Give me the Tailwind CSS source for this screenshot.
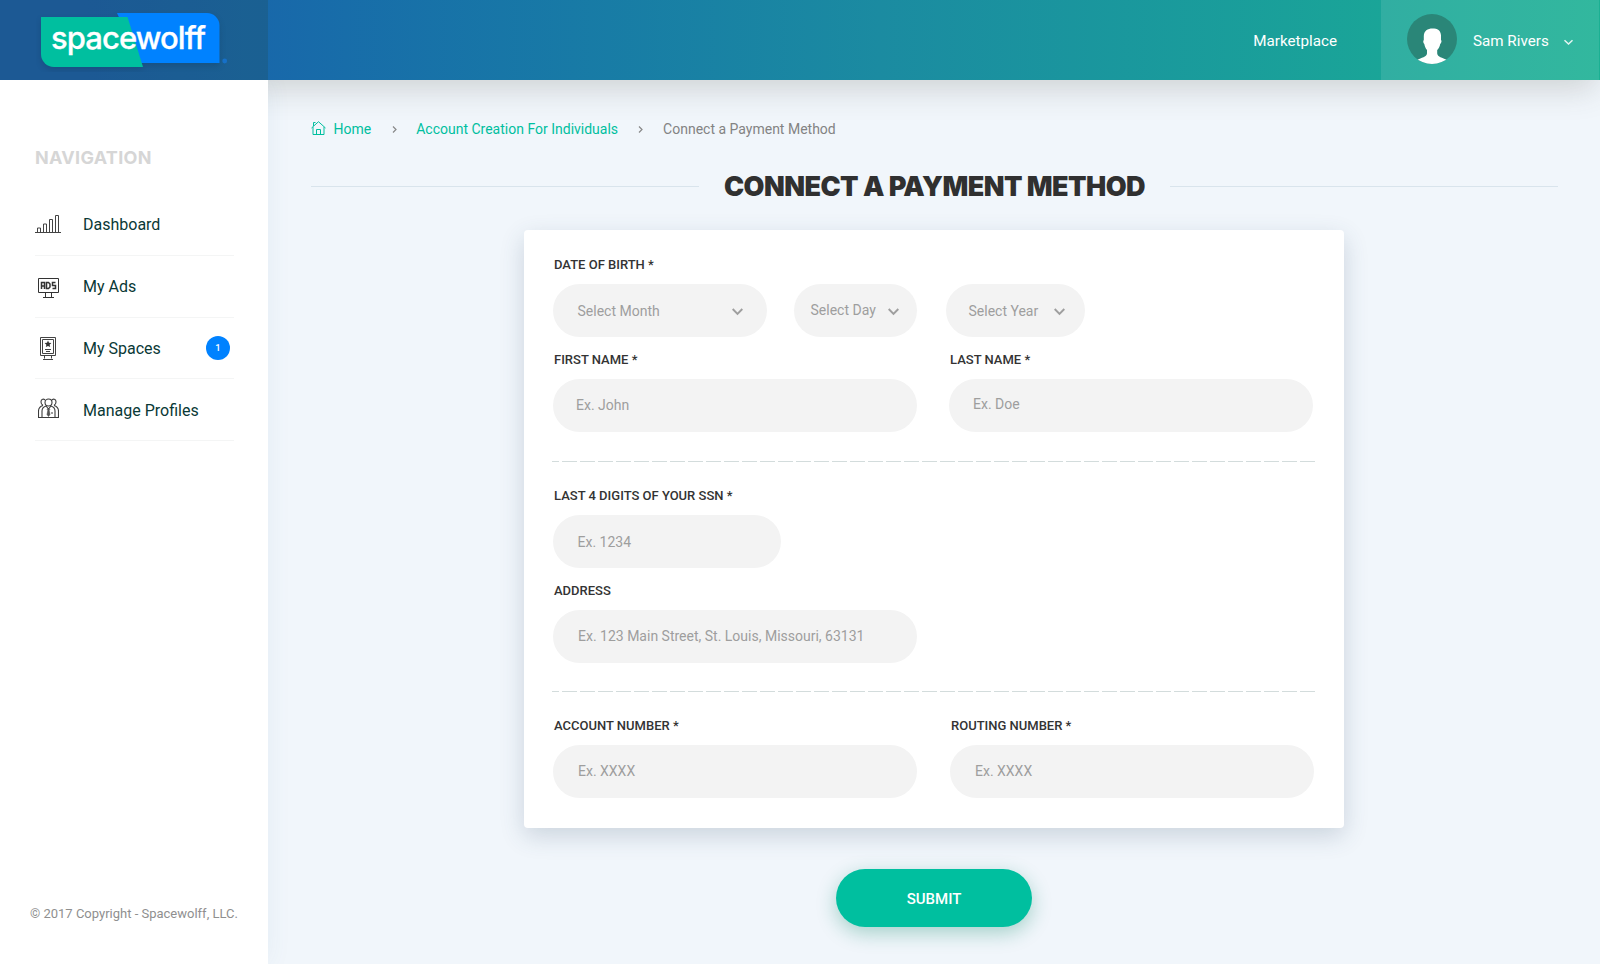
<!DOCTYPE html>
<html lang="en">
<head>
<meta charset="utf-8">
<title>Spacewolff - Connect a Payment Method</title>
<script src="https://cdn.jsdelivr.net/npm/@tailwindcss/browser@4"></script>
</head>
<body class="flex h-[964px] w-[1600px] flex-col overflow-hidden bg-[#f1f6fb] font-['Roboto',sans-serif]">

<header class="relative z-20 flex h-20 shrink-0 bg-linear-to-r from-[#1a5dac] from-5% via-[#1b8ba1] via-55% to-[#1bb093] to-100%">
  <div class="flex w-[268px] items-start bg-[#22505c]/30">
    <svg class="ml-9 mt-2" width="200" height="64" viewBox="36 8 200 64">
      <g class="drop-shadow-md">
        <path d="M117 13H207a12.500 12.500 0 0 1 12.500 12.500V63H140Z" fill="#0082ff"/>
        <path d="M41 17H127.500L143 67H54a13 13 0 0 1-13-13Z" fill="#00bf9f"/>
      </g>
      <circle cx="224.700" cy="61" r="2.400" fill="#1670c8"/>
      <text x="51" y="48.500" font-family="Inter, sans-serif" font-size="31" font-weight="500" fill="#fff" stroke="#fff" stroke-width=".3" textLength="155" lengthAdjust="spacing">spacewolff</text>
    </svg>
  </div>
  <div class="flex flex-1 items-center justify-end text-[15px] text-white">
    <a class="mr-11 mt-0.5 text-[15.200px]">Marketplace</a>
    <div class="flex h-20 w-[219px] items-center border-r border-[#1bb093] bg-white/10 pl-[26px]">
      <svg class="-mt-0.5" width="50" height="50" viewBox="0 0 50 50">
        <defs><clipPath id="disc"><circle cx="25" cy="25" r="25"/></clipPath></defs>
        <circle cx="25" cy="25" r="25" fill="#2a8678"/>
        <path clip-path="url(#disc)" d="M25.500 14.500c5 0 9 2 8.500 8.500v3c1 1 .3 3-.8 4-.4 2.500-1.300 4.200-3 6v3.500c.5 3.500 5 4 10 6.500V52H10v-6c4.500-2.500 9.500-3 10-6.500V36c-1.500-1.800-2.200-3.500-2.700-6-1-1-1.500-3-.5-4v-3c-.3-6 3.700-8.500 8.700-8.500Z" fill="#fff"/>
      </svg>
      <span class="ml-4 mt-[3px] w-[75px] text-[15.200px] whitespace-nowrap">Sam Rivers</span>
      <svg class="ml-[15px] mt-1" width="11" height="7" viewBox="0 0 11 7" fill="none" stroke="#e4f5f1" stroke-width="1.500"><path d="M1.500 1.200 5.500 5 9.500 1.200"/></svg>
    </div>
  </div>
</header>

<div class="flex flex-1">
  <aside class="relative z-10 flex w-[268px] flex-col bg-white pl-[35px] shadow-[0_0_24px_rgba(60,110,150,0.07)]">
    <h2 class="mt-[66px] h-6 font-['Inter'] text-[18px] leading-6 font-bold tracking-[0.3px] text-[#d6d6d6]">NAVIGATION</h2>
    <nav class="mt-6 w-[199px] text-base text-[#0a3936]">
      <a class="flex h-[62px] items-center border-b border-[#f4f5f5]">
        <svg class="-mt-px" width="26" height="20" viewBox="0 0 26 20" fill="none" stroke="#444" stroke-width="1"><path d="M0 18.500h26"/><path d="M2.500 18v-4h3v4M8.500 18v-8h3v8M14.500 18V5.500h3V18M20.500 18V1.500h3V18"/></svg>
        <span class="ml-[22px]">Dashboard</span>
      </a>
      <a class="flex h-[62px] items-center border-b border-[#f4f5f5]">
        <svg class="ml-[3px] mt-[3px]" width="21" height="20" viewBox="0 0 21 20" fill="none" stroke="#333"><path d="M.5.500h20v14H.500ZM7.500 15v4M13.500 15v4M5 19.500h11"/><path d="M3.500 11V4.500h3V11M3.500 8h3M8.500 4.500h2l1.500 1.500v3l-1.500 1.500h-2ZM17.500 4.500h-3v3h3v3h-3" stroke-width="1.500"/></svg>
        <span class="ml-6">My Ads</span>
      </a>
      <a class="flex h-[61px] items-center border-b border-[#f4f5f5]">
        <svg class="ml-[5px] -mt-px" width="16" height="24" viewBox="0 0 16 24" fill="none" stroke="#444"><path d="M.5 1.500h15v18H.500ZM2.500 3.500h11v14h-11ZM4.500 20v2.500M11.500 20v2.500M3 23.500h10M5 13.500h6M6 15.500h4"/><path d="m8 4.500 1 2.300 2.400.2-1.800 1.700.6 2.400L8 9.900l-2.200 1.200.6-2.400L4.600 7 7 6.800Z" fill="#333" stroke="none"/></svg>
        <span class="ml-[27px] pt-0.5">My Spaces</span>
        <span class="mr-1 ml-auto flex size-6 items-center justify-center rounded-full bg-[#0082ff] pt-px text-[9.500px] font-medium text-white">1</span>
      </a>
      <a class="flex h-[62px] items-center border-b border-[#f4f5f5]">
        <svg class="ml-[3px] -mt-[3px]" width="21" height="20" viewBox="0 0 21 20" fill="none" stroke="#3c3c3c" stroke-width="1.100"><circle cx="10.500" cy="4.500" r="3.500"/><path d="M7.500 2.500C6 .2 2.800 1 3 4c0 1.500.7 2.700 2 3.200M13.500 2.500C15 .2 18.200 1 18 4c0 1.500-.7 2.700-2 3.200M5 7.500C2 8.500.500 10.500.500 13v6.500h20V13c0-2.500-1.500-4.500-4.500-5.500M8 8c-3 1-4 3-4 5v6M13 8c3 1 4 3 4 5v6M8 8l2.500 3L13 8M13 15h2"/><path d="m10.500 10-1.300 1.500.6 1-.8 4 1.500 2 1.500-2-.8-4 .6-1Z" fill="#555" stroke-width=".5"/></svg>
        <span class="ml-6 pt-0.5">Manage Profiles</span>
      </a>
    </nav>
    <p class="mt-auto -ml-[5px] mb-[40px] text-[13px] leading-5 text-[#8f8f8f]">© 2017 Copyright - Spacewolff, LLC.</p>
  </aside>

  <main class="relative flex flex-1 flex-col pl-[43px]">
    <div class="absolute right-0 -left-8 -top-20 h-20 shadow-[0_12px_32px_-4px_rgba(70,70,60,0.21)]"></div>
    <div class="mt-[39px] flex h-5 items-center text-[14px] text-[#00bf9f]">
      <svg class="-mt-px" width="15" height="15" viewBox="0 0 15 15" fill="none" stroke="currentColor"><path d="M.5 7 7.500.700 14.500 7M2 6v7.500h11V6M2.500 5V1.500h2M5.500 13.500v-5h4v5"/></svg>
      <span class="ml-[7.500px]">Home</span>
      <svg class="ml-[21px]" width="5" height="7" viewBox="0 0 5 7" fill="none" stroke="#888" stroke-width="1.200"><path d="m1 .5 3 3-3 3"/></svg>
      <span class="ml-[19px]">Account Creation For Individuals</span>
      <svg class="ml-5" width="5" height="7" viewBox="0 0 5 7" fill="none" stroke="#888" stroke-width="1.200"><path d="m1 .5 3 3-3 3"/></svg>
      <span class="ml-5 text-[#838383]">Connect a Payment Method</span>
    </div>
    <div class="mt-[29px] flex h-9 w-[1247px] items-center justify-between">
      <span class="h-px w-[388px] bg-[#d9e4ec]"></span>
      <h1 class="pt-0.5 font-['Inter'] text-[27px] font-black tracking-[-0.55px] whitespace-nowrap text-[#303030]">CONNECT A PAYMENT METHOD</h1>
      <span class="h-px w-[388px] bg-[#d9e4ec]"></span>
    </div>

    <form class="mt-[26px] ml-[213px] h-[598px] w-[820px] rounded bg-white pl-[29px] text-[14px] text-[#9e9e9e] shadow-[0_8px_24px_rgba(50,75,105,0.2)]">
      <label class="ml-px block pt-[25px] text-[13px] leading-5 font-medium text-[#333]">DATE OF BIRTH *</label>
      <div class="mt-[9px] flex">
        <div class="flex h-[53px] w-[214px] items-center justify-between rounded-full bg-[#f3f3f3] pr-6 pl-[24.500px]"><span class="mt-0.5">Select Month</span><svg class="mt-0.5" width="11" height="8" viewBox="0 0 11 8" fill="none" stroke="#9e9e9e" stroke-width="1.900"><path d="m.7 1 4.800 5 4.800-5"/></svg></div>
        <div class="ml-[27px] flex h-[53px] w-[123px] items-center justify-between rounded-full bg-[#f3f3f3] pr-[18px] pl-[16.500px]"><span>Select Day</span><svg class="mt-0.5" width="11" height="8" viewBox="0 0 11 8" fill="none" stroke="#9e9e9e" stroke-width="1.900"><path d="m.7 1 4.800 5 4.800-5"/></svg></div>
        <div class="ml-[29px] flex h-[53px] w-[139px] items-center justify-between rounded-full bg-[#f3f3f3] pr-5 pl-[22.500px]"><span class="mt-0.5">Select Year</span><svg class="mt-0.5" width="11" height="8" viewBox="0 0 11 8" fill="none" stroke="#9e9e9e" stroke-width="1.900"><path d="m.7 1 4.800 5 4.800-5"/></svg></div>
      </div>
      <div class="mt-[13px] flex gap-8">
        <div class="w-[364px]">
          <label class="ml-px block text-[13px] leading-5 font-medium text-[#333]">FIRST NAME *</label>
          <div class="mt-[9px] flex h-[53px] items-center rounded-full bg-[#f3f3f3] pl-[23px]">Ex. John</div>
        </div>
        <div class="w-[364px]">
          <label class="ml-px block text-[13px] leading-5 font-medium text-[#333]">LAST NAME *</label>
          <div class="mt-[9px] flex h-[53px] items-center rounded-full bg-[#f3f3f3] pb-0.5 pl-6">Ex. Doe</div>
        </div>
      </div>
      <div class="mt-[29px] -ml-px h-px w-[763px] bg-[repeating-linear-gradient(90deg,#d3dcdc_0_15px,transparent_15px_18px)] bg-[position:-8px_0] bg-[length:18px_1px]"></div>
      <label class="mt-6 ml-px block text-[13px] leading-5 font-medium text-[#333]">LAST 4 DIGITS OF YOUR SSN *</label>
      <div class="mt-[9px] flex h-[53px] w-[228px] items-center rounded-full bg-[#f3f3f3] pt-0.5 pl-[24.500px]">Ex. 1234</div>
      <label class="mt-[13px] ml-px block text-[13px] leading-5 font-medium text-[#333]">ADDRESS</label>
      <div class="mt-[9px] flex h-[53px] w-[364px] items-center rounded-full bg-[#f3f3f3] pb-px pl-[25px]">Ex. 123 Main Street, St. Louis, Missouri, 63131</div>
      <div class="mt-[28px] -ml-px h-px w-[763px] bg-[repeating-linear-gradient(90deg,#d3dcdc_0_15px,transparent_15px_18px)] bg-[position:-8px_0] bg-[length:18px_1px]"></div>
      <div class="mt-6 flex gap-[33px]">
        <div class="w-[364px]">
          <label class="ml-px block text-[13px] leading-5 font-medium text-[#333]">ACCOUNT NUMBER *</label>
          <div class="mt-[9px] flex h-[53px] items-center rounded-full bg-[#f3f3f3] pb-px pl-[25px]">Ex. XXXX</div>
        </div>
        <div class="w-[364px]">
          <label class="ml-px block text-[13px] leading-5 font-medium text-[#333]">ROUTING NUMBER *</label>
          <div class="mt-[9px] flex h-[53px] items-center rounded-full bg-[#f3f3f3] pb-px pl-[25px]">Ex. XXXX</div>
        </div>
      </div>
    </form>
    <button class="mt-[41px] ml-[525px] h-[58px] w-[196px] rounded-full bg-[#00bf9f] pt-0.5 text-[15px] font-medium text-white shadow-[0_6px_20px_rgba(0,130,100,0.32)]">SUBMIT</button>
  </main>
</div>
</body>
</html>
